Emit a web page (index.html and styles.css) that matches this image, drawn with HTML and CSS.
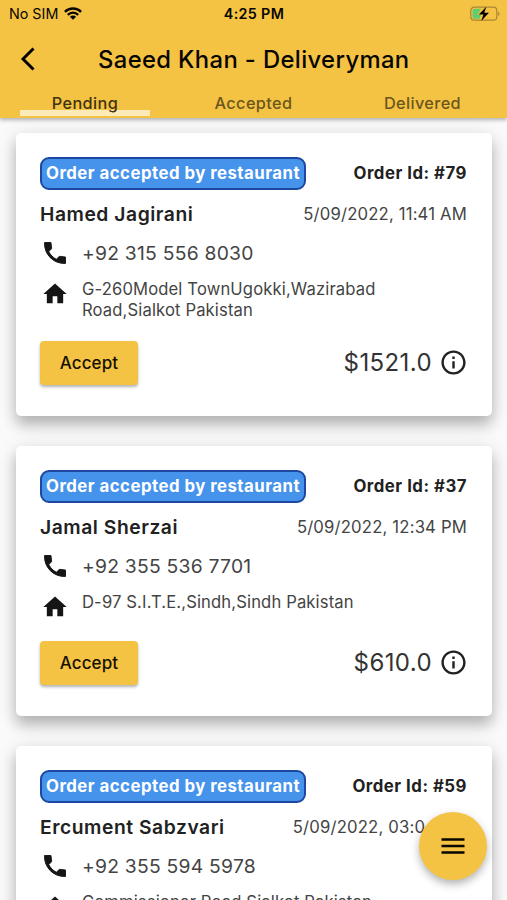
FILE: index.html
```html
<!DOCTYPE html>
<html lang="en">
<head>
<meta charset="utf-8">
<title>Saeed Khan - Deliveryman</title>
<link rel="stylesheet" href="styles.css">
</head>
<body>
<svg class="defs" width="0" height="0">
  <symbol id="phone" viewBox="0 0 24 24"><path d="M21 15.46l-5.27-.61-2.52 2.52c-2.83-1.44-5.15-3.75-6.59-6.59l2.53-2.53L8.54 3H3.03C2.45 13.18 10.82 21.55 21 20.97v-5.51z" stroke="#151515" stroke-width=".8" stroke-linejoin="round"/></symbol>
  <symbol id="home" viewBox="0 0 24 24"><path d="M10 20v-6h4v6h5v-8h3L12 3 2 12h3v8z"/></symbol>
  <symbol id="info" viewBox="0 0 24 24"><path d="M11 7h2v2h-2zm0 4h2v6h-2zm1-9C6.48 2 2 6.48 2 12s4.48 10 10 10 10-4.48 10-10S17.52 2 12 2zm0 18c-4.41 0-8-3.59-8-8s3.59-8 8-8 8 3.59 8 8-3.59 8-8 8z"/></symbol>
</svg>
<div class="screen">
  <header class="appbar">
    <div class="status">
      <span class="carrier"><span class="sim">No SIM</span>
        <svg class="wifi" viewBox="0 0 18 13"><g fill="none" stroke="#080600" stroke-width="2.4"><path d="M.9 4.8C5.4.3 12.600.3 17.100 4.800"/><path d="M3.800 7.800c3-2.900 7.400-2.900 10.400 0"/></g><path d="M9 12.800 5.900 9.700c1.800-1.600 4.400-1.600 6.200 0z"/></svg>
      </span>
      <span class="clock">4:25 PM</span>
      <svg class="battery" viewBox="0 0 30 16"><rect x=".8" y="1.200" width="26" height="13" rx="3.500" fill="none" stroke="#a98632" stroke-width="1.200"/><path d="M28.200 5.500c1.800.7 1.800 3.700 0 4.400z" fill="#a98632"/><path d="M4.500 2.800h6.500L7.500 9h3.500l-1.500 3.800h-5a2 2 0 0 1-2-2v-6a2 2 0 0 1 2-2z" fill="#60cd70"/><path d="M16.300.8 8.800 8.600h4.600l-2.200 6.500 7.800-8.400h-4.700z"/></svg>
    </div>
    <div class="titlebar">
      <svg class="back" viewBox="0 0 16 24"><path d="M13.500 1.500 3 12l10.500 10.500" fill="none" stroke="#000" stroke-width="2.900"/></svg>
      <h1 class="title">Saeed Khan - Deliveryman</h1>
    </div>
    <nav class="tabs">
      <a class="tab active"><span>Pending</span></a>
      <a class="tab"><span>Accepted</span></a>
      <a class="tab"><span>Delivered</span></a>
    </nav>
  </header>
  <main class="orders">
    <article class="card">
      <div class="row top"><span class="badge">Order accepted by restaurant</span><span class="order-id">Order Id: #79</span></div>
      <div class="row who"><span class="name">Hamed Jagirani</span><span class="date">5/09/2022, 11:41 AM</span></div>
      <div class="phone"><svg class="icon"><use href="#phone"/></svg><span>+92 315 556 8030</span></div>
      <div class="address"><svg class="icon"><use href="#home"/></svg><span>G-260Model TownUgokki,Wazirabad<br>Road,Sialkot Pakistan</span></div>
      <div class="row bottom"><button class="accept">Accept</button><span class="total">$1521.0<svg class="info"><use href="#info"/></svg></span></div>
    </article>
    <article class="card">
      <div class="row top"><span class="badge">Order accepted by restaurant</span><span class="order-id">Order Id: #37</span></div>
      <div class="row who"><span class="name">Jamal Sherzai</span><span class="date">5/09/2022, 12:34 PM</span></div>
      <div class="phone"><svg class="icon"><use href="#phone"/></svg><span>+92 355 536 7701</span></div>
      <div class="address"><svg class="icon"><use href="#home"/></svg><span>D-97 S.I.T.E.,Sindh,Sindh Pakistan</span></div>
      <div class="row bottom"><button class="accept">Accept</button><span class="total">$610.0<svg class="info"><use href="#info"/></svg></span></div>
    </article>
    <article class="card">
      <div class="row top"><span class="badge">Order accepted by restaurant</span><span class="order-id">Order Id: #59</span></div>
      <div class="row who"><span class="name">Ercument Sabzvari</span><span class="date">5/09/2022, 03:04 PM</span></div>
      <div class="phone"><svg class="icon"><use href="#phone"/></svg><span>+92 355 594 5978</span></div>
      <div class="address"><svg class="icon"><use href="#home"/></svg><span>Commissioner Road,Sialkot Pakistan</span></div>
    </article>
  </main>
  <button class="fab" aria-label="Menu"><svg viewBox="0 0 24 18"><path d="M.5 2.500h23M.5 9h23M.5 15.500h23" stroke="#080600" stroke-width="2.500"/></svg></button>
</div>
</body>
</html>
```
FILE: styles.css
```css
* { box-sizing: border-box; }
body { margin: 0; font-family: Inter, "Liberation Sans", sans-serif; color: #212121; }
.defs { display: block; position: absolute; }
.screen { position: relative; height: 900px; overflow: hidden; background: #fafafa; }

.appbar { position: relative; z-index: 1; height: 118px; background: #f5c344; color: #080600; box-shadow: 0 2px 4px rgba(0,0,0,.3); }
.status { display: grid; grid-template-columns: 1fr auto 1fr; align-items: center; height: 28px; padding: 0 7px 0 9px; }
.carrier { display: flex; align-items: center; gap: 6px; padding-bottom: 2px; font-size: 14.300px; }
.wifi { width: 18px; height: 13px; }
.clock { padding: 0 1px 2px 0; font-size: 14.300px; font-weight: 600; letter-spacing: .35px; }
.battery { justify-self: end; width: 30px; height: 16px; }
.titlebar { display: flex; align-items: center; height: 62px; padding-left: 20px; }
.back { width: 16px; height: 24px; }
.title { margin: 0 0 0 62px; font-size: 23.800px; font-weight: 500; letter-spacing: .37px; white-space: nowrap; }
.tabs { display: grid; grid-template-columns: repeat(3, 1fr); height: 28px; padding-bottom: 2px; font-size: 16.300px; font-weight: 500; color: #6b561d; }
.tab { display: flex; align-items: center; justify-content: center; padding-bottom: 1px; letter-spacing: .38px; }
.tab.active { margin: 0 19px 0 20px; padding-bottom: 0; border-bottom: 6px solid #fdeab9; color: #3f3211; }
.tab.active span { position: relative; top: 2.500px; }

.orders { display: flex; flex-direction: column; gap: 30px; padding: 15px 15px 0 16px; }
.card { padding: 24px 25px 31px 24px; border-radius: 5px; background: #fff; box-shadow: 0 9px 14px rgba(0,0,0,.24), 0 2px 22px rgba(0,0,0,.1); }
.row { display: flex; align-items: center; justify-content: space-between; white-space: nowrap; }
.top { height: 33px; }
.badge { height: 33px; padding: 0 4px; border: 2px solid #1c499f; border-radius: 9px; background: #4693ec; color: #fff; font-size: 16.800px; font-weight: 700; line-height: 28px; letter-spacing: .47px; }
.order-id { padding-bottom: 1px; font-size: 16.800px; font-weight: 700; letter-spacing: .5px; }
.who { height: 30px; margin-top: 9px; }
.name { font-size: 19.300px; font-weight: 600; letter-spacing: .54px; }
.date { font-size: 16.700px; letter-spacing: .17px; color: #444; }
.phone { display: flex; align-items: center; height: 30px; margin-top: 9px; gap: 13px; padding-left: 1px; font-size: 19.300px; letter-spacing: .24px; color: #444; }
.phone span { padding-bottom: 1px; }
.icon { flex: none; width: 28px; height: 28px; fill: #151515; }
.address { display: flex; gap: 13px; min-height: 29px; margin-top: 11px; padding-left: 1px; font-size: 16.600px; line-height: 21px; letter-spacing: .14px; color: #444; }
.address .icon { margin-top: 1px; }
.bottom { height: 44px; margin-top: 20px; }
.accept { width: 98px; height: 44px; padding: 0 0 1px; border: 0; border-radius: 4px; background: #f5c344; color: #151000; font: 500 17px Inter, sans-serif; letter-spacing: .1px; box-shadow: 0 2px 3px rgba(0,0,0,.3); }
.total { display: flex; align-items: center; gap: 7px; padding-bottom: 1px; font-size: 24px; letter-spacing: .4px; color: #333; }
.info { width: 29px; height: 29px; margin-right: -1px; fill: #212121; }

.fab { position: absolute; left: 419px; top: 812px; display: flex; align-items: center; justify-content: center; width: 68px; height: 68px; padding: 0; border: 0; border-radius: 50%; background: #f5c344; box-shadow: 0 4px 8px rgba(0,0,0,.3); }
.fab svg { width: 24px; height: 18px; }
```
